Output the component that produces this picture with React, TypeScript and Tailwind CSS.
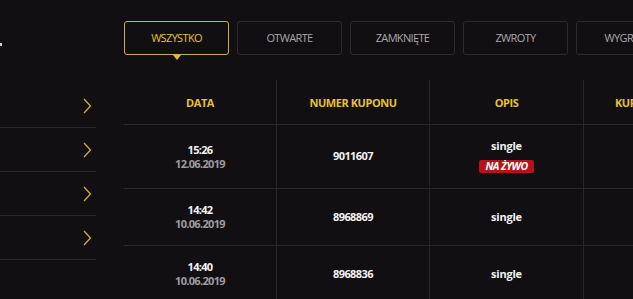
const tabs = ['WSZYSTKO', 'OTWARTE', 'ZAMKNIĘTE', 'ZWROTY', 'WYGRANE'];
const headers = ['DATA', 'NUMER KUPONU', 'OPIS', 'KURS CAŁKOWITY'];

const rows = [
  { time: '15:26', date: '12.06.2019', number: '9011607', live: true },
  { time: '14:42', date: '10.06.2019', number: '8968869', live: false },
  { time: '14:40', date: '10.06.2019', number: '8968836', live: false },
];

function Chevron() {
  return (
    <svg width="10" height="16" viewBox="0 0 10 16" fill="none">
      <polyline points="2,1 8.5,8 2,15" stroke="#c9a743" strokeWidth="1.4" />
    </svg>
  );
}

export default function App() {
  return (
    <div
      className="w-[633px] h-[299px] overflow-hidden bg-[#120f13] flex text-[11px]"
      style={{ fontFamily: '"Open Sans", "DejaVu Sans", sans-serif' }}
    >
      {/* Sidebar */}
      <div className="w-[96px] flex-none flex flex-col">
        <div className="mt-[43px] w-[2px] h-[3px] bg-[#cfcfcf]" />
        <div className="mt-[38px]">
          {[0, 1, 2, 3].map((i) => (
            <div key={i} className="h-[44px] border-b border-[#2a282b] flex items-center justify-end pr-[4px]">
              <Chevron />
            </div>
          ))}
        </div>
      </div>

      {/* Main */}
      <div className="ml-[28px] flex-1 min-w-0 overflow-hidden pt-[21px]">
        <div className="flex gap-[8px]">
          {tabs.map((t, i) => (
            <div
              key={t}
              className={
                'relative flex-none w-[105px] h-[34px] rounded-[3px] border flex items-center justify-center tracking-[-0.06em] ' +
                (i === 0 ? 'border-[#c8ad5c] text-[#e2c03c]' : 'border-[#2c2a2d] text-[#a9a7a9]')
              }
            >
              {t}
              {i === 0 && (
                <span className="absolute left-1/2 -translate-x-1/2 -bottom-[6px] w-0 h-0 border-l-[4px] border-r-[4px] border-t-[5px] border-l-transparent border-r-transparent border-t-[#e0bb3a]" />
              )}
            </div>
          ))}
        </div>

        <div className="mt-[25px] w-[650px]">
          <div className="grid grid-cols-[153px_153px_154px_153px] h-[45px] border-b border-[#29272a]">
            {headers.map((h) => (
              <div key={h} className="border-r border-[#29272a] flex items-center justify-center pt-[3px] font-bold text-[#e6c130] tracking-[-0.04em] whitespace-nowrap">
                {h}
              </div>
            ))}
          </div>
          {rows.map((r) => (
            <div
              key={r.number}
              className={'grid grid-cols-[153px_153px_154px_153px] border-b border-[#29272a] ' + (r.live ? 'h-[64px]' : 'h-[57px]')}
            >
              <div className="border-r border-[#29272a] flex flex-col items-center justify-center font-bold leading-[14px] tracking-[-0.06em]">
                <span className="text-[#f2f2f2]">{r.time}</span>
                <span className="text-[#9e9c9f]">{r.date}</span>
              </div>
              <div className="border-r border-[#29272a] flex items-center justify-center font-bold text-[#f2f2f2] tracking-[-0.05em]">
                {r.number}
              </div>
              <div className="border-r border-[#29272a] flex flex-col items-center justify-center font-bold text-[#f2f2f2] tracking-[-0.02em]">
                <span className={r.live ? 'mt-[-2px]' : ''}>single</span>
                {r.live && (
                  <span className="mt-[6px] px-[6px] h-[13px] leading-[13px] rounded-[2px] bg-[#b4131c] text-white font-bold italic text-[10.5px] tracking-[-0.05em]">
                    NA ŻYWO
                  </span>
                )}
              </div>
              <div className="border-r border-[#29272a]" />
            </div>
          ))}
        </div>
      </div>
    </div>
  );
}
